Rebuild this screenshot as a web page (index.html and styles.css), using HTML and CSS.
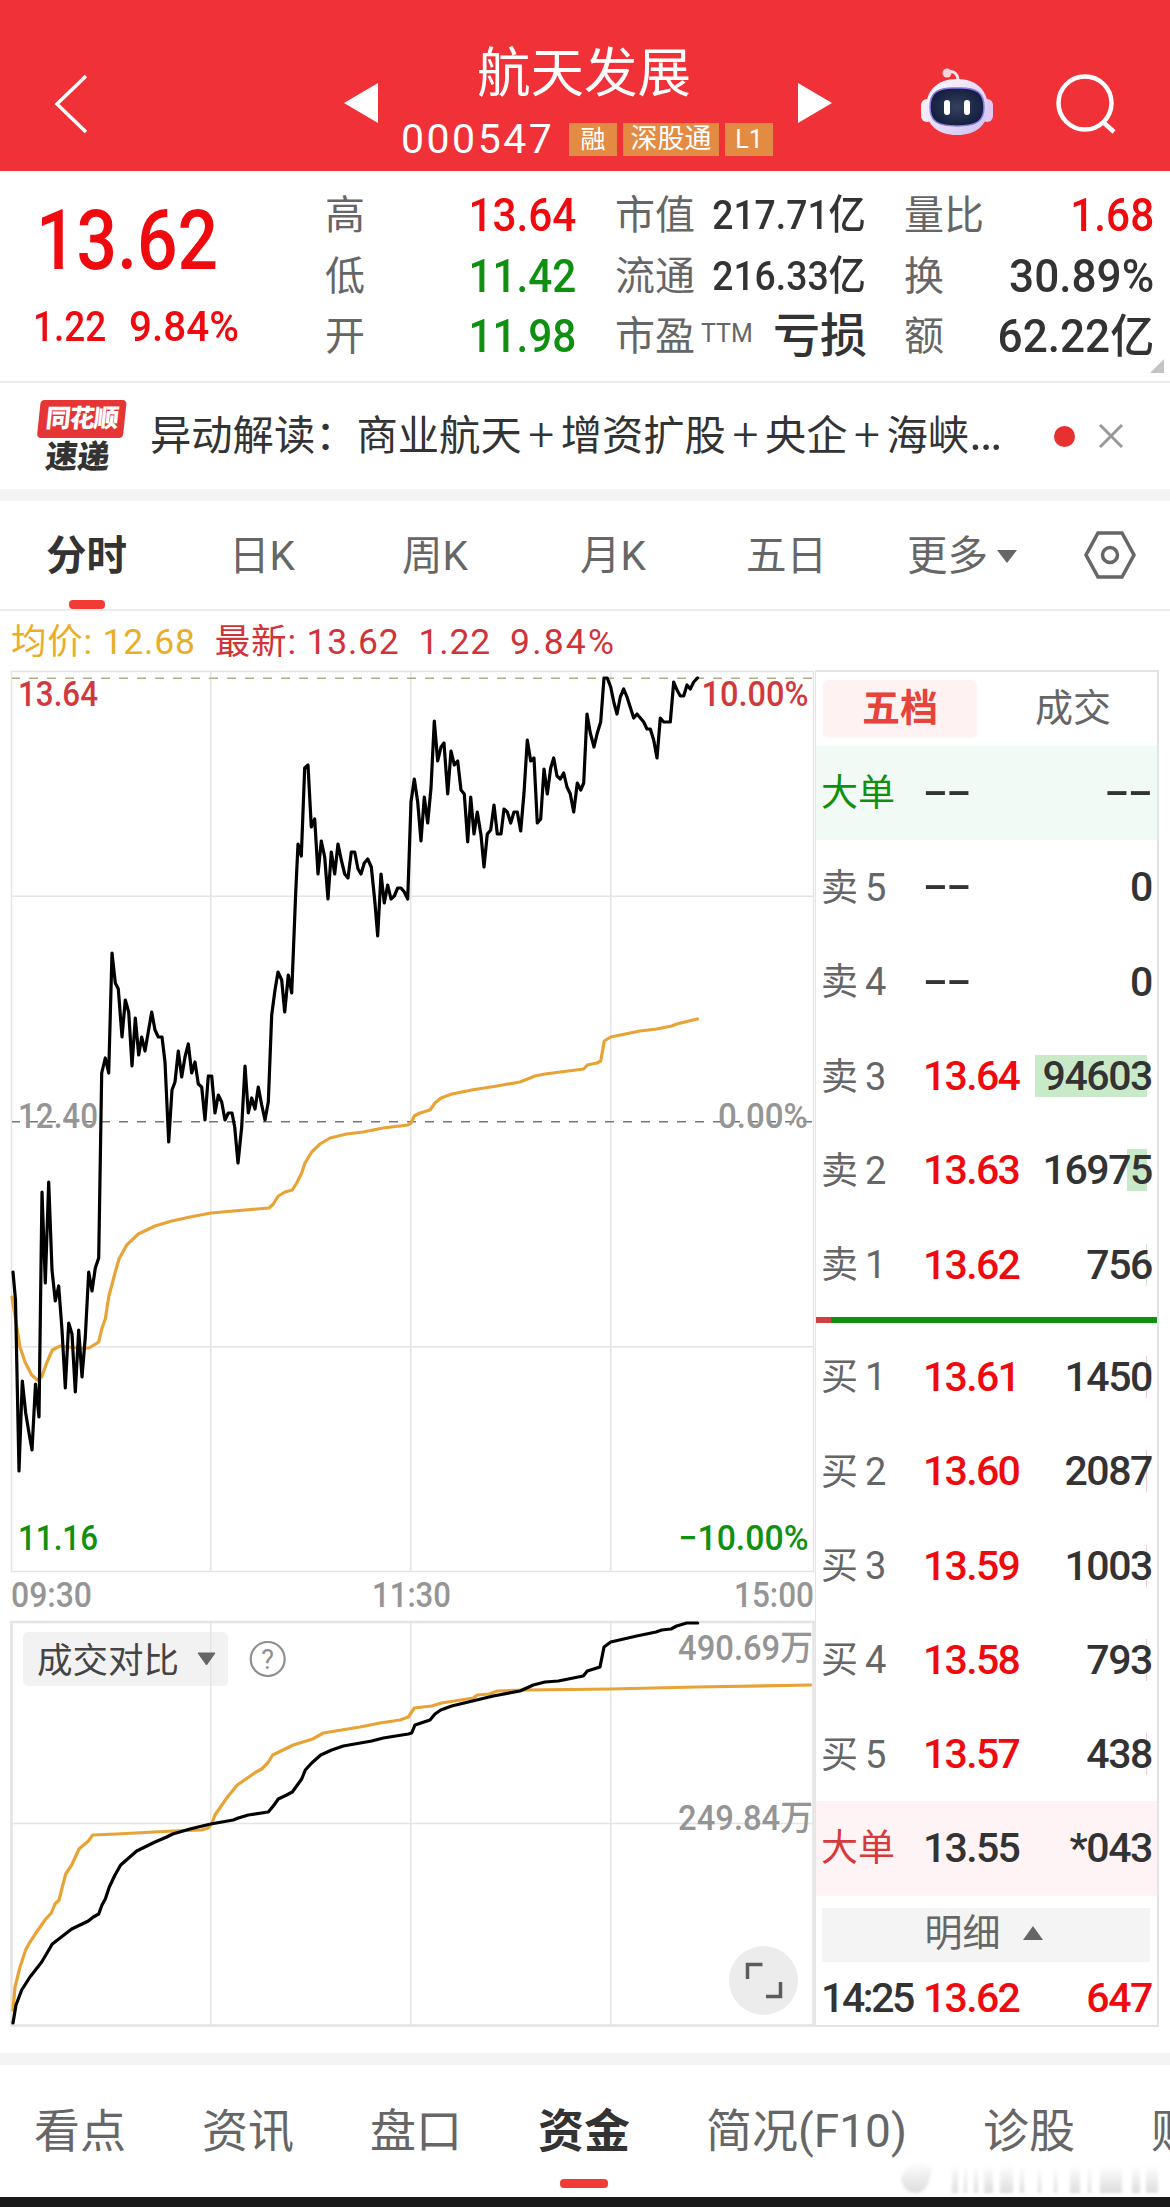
FILE: index.html
```
<!DOCTYPE html>
<html lang="zh-CN">
<head>
    <meta charset="UTF-8">
    <meta name="viewport" content="width=device-width, initial-scale=1.0">
    <title>航天发展 000547</title>
    <link rel="stylesheet" href="styles.css">
</head>
<body>

    <header class="header">
        <svg class="back" width="36" height="62" viewBox="0 0 36 62"><path d="M32 3 3 31 32 59" fill="none" stroke="#fff" stroke-width="3.500"/></svg>
        <svg class="prev" width="34" height="40" viewBox="0 0 34 40"><path d="M34 0V40L0 20Z" fill="#fff"/></svg>
        <div class="stock">
            <div class="stock-name">航天发展</div>
            <div class="stock-code">
                <span class="code">000547</span>
                <span class="tag">融</span>
                <span class="tag tag-wide">深股通</span>
                <span class="tag">L1</span>
            </div>
        </div>
        <svg class="next" width="34" height="40" viewBox="0 0 34 40"><path d="M0 0V40L34 20Z" fill="#fff"/></svg>
        <svg class="robot" width="74" height="70" viewBox="0 0 74 70">
            <defs>
                <linearGradient id="shell" x1="0" y1="0" x2="1" y2="1">
                    <stop offset="0" stop-color="#fff"/>
                    <stop offset=".5" stop-color="#eadcf6"/>
                    <stop offset="1" stop-color="#c9c0f5"/>
                </linearGradient>
                <radialGradient id="visor">
                    <stop offset="0" stop-color="#34415f"/>
                    <stop offset="1" stop-color="#151f3f"/>
                </radialGradient>
            </defs>
            <path d="M27 5C34 3 38 7 38 14" fill="none" stroke="#fbdfe8" stroke-width="3"/>
            <circle cx="27" cy="6" r="4.5" fill="#fbd5dc"/>
            <rect x="1" y="32" width="12" height="23" rx="6" fill="#f2edfb"/>
            <rect x="61" y="32" width="12" height="23" rx="6" fill="#e0c9f0"/>
            <path d="M37 12C58 12 68 25 68 41C68 58 56 68 37 68C18 68 6 58 6 41C6 25 16 12 37 12Z" fill="url(#shell)"/>
            <path d="M37 21C57 20 64 26 64 40C64 54 57 59 37 59C17 59 10 54 10 40C10 26 17 20 37 21Z" fill="url(#visor)" stroke="#8a7be0" stroke-width="1.5"/>
            <rect x="24" y="33" width="6" height="15" rx="3" fill="#fff"/>
            <rect x="44" y="33" width="6" height="15" rx="3" fill="#fff"/>
        </svg>
        <svg class="search" width="62" height="62" viewBox="0 0 62 62"><g fill="none" stroke="#fff" stroke-width="4.5"><circle cx="29" cy="30" r="26.5"/><path d="M47 49 58 59"/></g></svg>
    </header>

    <section class="quote">
        <div class="quote-main">
            <div class="price num">13.62</div>
            <div class="change"><span class="num">1.22</span><span class="num percent">9.84%</span></div>
        </div>
        <div class="quote-col col-range">
            <div><label>高</label><b class="num big red">13.64</b></div>
            <div><label>低</label><b class="num big green">11.42</b></div>
            <div><label>开</label><b class="num big green">11.98</b></div>
        </div>
        <div class="quote-col col-cap">
            <div><label>市值</label><b class="num">217.71亿</b></div>
            <div><label>流通</label><b class="num">216.33亿</b></div>
            <div><label>市盈<sup>TTM</sup></label><b class="loss">亏损</b></div>
        </div>
        <div class="quote-col col-turn">
            <div><label>量比</label><b class="num big red">1.68</b></div>
            <div><label>换</label><b class="num big">30.89%</b></div>
            <div><label>额</label><b class="num big">62.22亿</b></div>
        </div>
        <svg class="corner" width="14" height="14" viewBox="0 0 14 14"><path d="M14 0V14H0Z" fill="#c4c4c4"/></svg>
    </section>

    <section class="news">
        <div class="news-logo">
            <div class="logo-top">同花顺</div>
            <div class="logo-bottom">速递</div>
        </div>
        <div class="news-title">异动解读：商业航天<span>+</span>增资扩股<span>+</span>央企<span>+</span>海峡<em>…</em></div>
        <span class="dot"></span>
        <svg width="24" height="24" viewBox="0 0 24 24"><path d="M1 1 23 23M23 1 1 23" stroke="#999" stroke-width="3"/></svg>
    </section>

    <nav class="period">
        <span class="active">分时</span>
        <span>日K</span>
        <span>周K</span>
        <span>月K</span>
        <span>五日</span>
        <span>更多<svg class="caret" width="20" height="13" viewBox="0 0 20 13"><path d="M0 0H20L10 13Z" fill="#666"/></svg></span>
        <svg class="setting" width="52" height="48" viewBox="0 0 52 48"><g fill="none" stroke="#666" stroke-width="3.5"><path d="M14 2H38L50 24 38 46H14L2 24Z"/><circle cx="26" cy="24" r="7.5"/></g></svg>
    </nav>

    <div class="legend">
        <span class="avg">均价: 12.68</span>
        <span>最新: 13.62</span>
        <span>1.22</span>
        <span class="rate">9.84%</span>
    </div>

    <main class="board">
        <div class="charts">
            <!-- price line -->
            <svg class="price-chart" width="805" height="950" viewBox="10 670 805 950">
                <g fill="none" stroke="#e4e4e4" stroke-width="1.5">
                    <path d="M11.5 671.5H813.5V1571.5H11.5Z"/>
                    <path d="M210.7 672V1571M410.7 672V1571M610.7 672V1571M12 896.3H813M12 1346.7H813"/>
                </g>
                <path d="M12 678.3H813" stroke="#b3ad83" stroke-width="1.5" stroke-dasharray="9 9" stroke-dashoffset="1"/>
                <path d="M12 1121.7H813" stroke="#777" stroke-width="1.5" stroke-dasharray="9 9" stroke-dashoffset="1"/>
                <polyline class="line-avg" points="12,1297 17.3,1330 20,1347 25,1362 31.7,1375 37.3,1380 41.7,1377 46.7,1363 52.3,1350 60,1346 68,1347 80,1348 89,1348 98.7,1342 102,1328 105.3,1319 108.7,1297 115,1273 119,1259 126.7,1245 138.3,1234 155,1226 171.7,1221 190,1217 211,1213 245,1210 269,1208 273.3,1204 278.3,1196 285,1192 292.3,1190 296.7,1183 301.7,1173 305,1163 311.7,1152 320,1144 330,1138 346.7,1134 363,1132 383,1128 407.7,1125 411,1123 414.3,1116 420,1113 430,1110 435,1103 441,1098 452,1094 471.7,1090 497,1086 520,1082 535,1076 545,1074 583.7,1069 587.3,1065 597,1063 600.7,1061 604.3,1041 610.7,1037 640,1031 656.7,1029 671.7,1026 676.7,1024 697.3,1019"/>
                <polyline class="line-now" points="13,1272 15.5,1300 19,1471 22.3,1381 25.7,1413 29,1433 32,1450 35.5,1384 39,1417 42,1192 45.3,1283 48.7,1182 52,1270 55.3,1301 58.7,1286 62,1330 65.3,1388 68.7,1323 72,1334 75.3,1392 78.7,1330 82,1377 85.3,1337 88.7,1272 92,1291 95.3,1268 98.7,1258 101.7,1073 105.3,1058 108.7,1073 112,953 115.3,983 118.3,989 122,1037 125.3,1000 128.7,1012 132,1066 135.3,1018 138.7,1055 141.7,1037 145,1051 151.7,1012 155,1030 158.3,1037 162,1037 165,1062 168.7,1142 172,1090 175,1082 178.3,1051 181.7,1077 185,1057 188.3,1044 191.7,1073 195,1062 198.3,1084 201.7,1087 205,1120 208.3,1076 211.7,1076 215,1113 218.3,1095 221.7,1102 225,1120 228.3,1113 232,1113 234.7,1127 238,1163 241.7,1127 245,1066 248.3,1113 251.7,1098 255,1109 258.3,1087 261.7,1105 265,1120 268.3,1102 271.7,1015 275,990 278,972 281.7,980 284.7,1012 288.3,975 291.7,993 295.7,893 298,844 301.3,856 304.7,768 308,765 311.3,827 314.7,819 318,874 321.3,841 324.7,857 328,899 331.3,852 334.7,874 338,844 341.3,860 344.7,874 348,878 351.3,852 354.7,852 358,869 361,874 364.3,863 367.7,859 371.3,867 374.7,900 377.7,936 381,874 384.3,903 387.7,885 391,899 394.3,896 397.7,888 401,888 404.3,892 407.7,899 411,802 414.3,779 417.7,802 421,841 424.3,797 427.7,823 431,788 434.3,721 437.7,761 441,747 444,743 447.7,794 451,751 454.3,765 457.7,761 461,790 464.3,794 467.7,842 470.7,797 474,834 477.3,812 481,835 484,867 487.3,834 490.7,830 494,805 497.3,834 501,834 504,809 507.3,812 510.7,823 514,812 517.3,812 520.7,831 524,793 527.3,740 530.7,761 534,758 537.3,823 540.7,819 544,769 547.3,794 550.7,768 553.7,758 557,776 560.3,779 563.7,773 567,787 570.3,794 573.7,812 577.3,783 580.7,790 583.7,783 587,714 590.3,733 594,747 597.3,733 600.7,722 604,678 607.3,678 610.7,687 614,703 617,714 620.3,697 623.7,689 627,697 633.7,718 637,714 643.7,722 647,729 650.3,729 653.7,740 657,758 660.3,718 663.7,722 670.3,722 673.7,682 677,690 680.3,696 683.7,696 687,685 690.3,689 693.7,682 697.5,678"/>
                <g class="axis">
                    <text x="18" y="705.500" textLength="80" lengthAdjust="spacingAndGlyphs" class="up">13.64</text>
                    <text x="701.500" y="705.500" textLength="107" lengthAdjust="spacingAndGlyphs" class="up">10.00%</text>
                    <text x="18" y="1127.500" textLength="80" lengthAdjust="spacingAndGlyphs">12.40</text>
                    <text x="718" y="1127.500" textLength="90" lengthAdjust="spacingAndGlyphs">0.00%</text>
                    <text x="18" y="1549.500" textLength="80" lengthAdjust="spacingAndGlyphs" class="down">11.16</text>
                    <text x="678.500" y="1549.500" textLength="130" lengthAdjust="spacingAndGlyphs" class="down">−10.00%</text>
                    <text x="11" y="1606.500" textLength="81" lengthAdjust="spacingAndGlyphs">09:30</text>
                    <text x="372" y="1606.500" textLength="79" lengthAdjust="spacingAndGlyphs">11:30</text>
                    <text x="734" y="1606.500" textLength="80" lengthAdjust="spacingAndGlyphs">15:00</text>
                </g>
            </svg>
            <!-- turnover compared with the previous day -->
            <svg class="volume-chart" width="805" height="408" viewBox="10 1620 805 408">
                <rect x="23" y="1632" width="205" height="54" rx="5" fill="#f2f2f2"/>
                <g fill="none" stroke="#e4e4e4" stroke-width="1.5">
                    <path d="M11.5 1622H813.5V2025.500H11.5Z" stroke-width="2.500"/>
                    <path d="M210.7 1622V2025M410.7 1622V2025M610.7 1622V2025M12 1823.500H813"/>
                </g>
                <text class="menu-text" x="37" y="1673" textLength="142" lengthAdjust="spacingAndGlyphs">成交对比</text>
                <path d="M198 1653H215L206.500 1665Z" fill="#666" stroke="#666" stroke-linejoin="round"/>
                <circle cx="267.700" cy="1659" r="17" fill="none" stroke="#8f8f8f" stroke-width="2.200"/>
                <text class="help" x="267.700" y="1668.500">?</text>
                <polyline class="line-avg" points="13,2010 15,1987 20,1967 26,1949 30,1942 36,1933 45,1920 51.3,1913 55,1904 59,1900 62.3,1887 65.7,1874 71.7,1865 79,1849 88.3,1841 92.7,1835 116.7,1834 173.3,1831 201.7,1830 208.3,1828 212,1823 215,1815 226.7,1798 237.3,1785 256,1772 261.7,1769 267.7,1763 272.7,1755 293.3,1745 312.7,1739 323.3,1733 360,1727 380,1723 400,1720 408.3,1717 414.3,1708 431.7,1706 441.7,1703 473.3,1698 477.3,1695 489.3,1694 497.3,1691 526.7,1690 610.7,1689 696.7,1687 810.7,1685"/>
                <polyline class="line-now" points="13,2023 16,2005 21.7,1990 30,1977 41.7,1962 52.3,1944 71.7,1929 88.3,1921 93.3,1917 98.7,1914 102,1905 105.3,1899 109.3,1887 115,1875 120.7,1865 136.7,1851 155,1842 166.7,1837 172.7,1834 190,1829 210.7,1824 233.3,1820 238.3,1818 248.3,1815 268.3,1812 273.3,1806 278.3,1799 286.7,1795 292.3,1792 301.7,1779 305.3,1770 311.7,1763 320.7,1755 331.7,1750 343.3,1746 371.7,1741 383.3,1738 408.3,1734 411.7,1733 415,1725 430,1720 435,1714 440.7,1710 451.7,1706 493.3,1696 520,1691 533.3,1685 545,1682 558.3,1681 583.3,1676 587.3,1671 600,1667 604,1647 610.7,1642 636.7,1636 656,1632 661.7,1630 671,1629 676.7,1626 686.7,1623 697.7,1623"/>
                <g class="axis">
                    <text x="678" y="1660" textLength="135" lengthAdjust="spacingAndGlyphs">490.69万</text>
                    <text x="678" y="1830" textLength="135" lengthAdjust="spacingAndGlyphs">249.84万</text>
                </g>
                <circle cx="763.500" cy="1980.500" r="34.500" fill="#ececec"/>
                <path d="M762.500 1964.500H747.500V1979M766 1996.500H780.500V1982" fill="none" stroke="#5c5c5c" stroke-width="3.500"/>
            </svg>
        </div>

        <aside class="book">
            <div class="book-tabs"><span class="on">五档</span><span>成交</span></div>
            <div class="row big-sell"><i>大单</i><b class="dash">––</b><em class="dash">––</em></div>
            <div class="row"><i>卖<u>5</u></i><b class="dash">––</b><em>0</em></div>
            <div class="row"><i>卖<u>4</u></i><b class="dash">––</b><em>0</em></div>
            <div class="row"><i>卖<u>3</u></i><b>13.64</b><em><s class="depth depth-full"></s>94603</em></div>
            <div class="row"><i>卖<u>2</u></i><b>13.63</b><em><s class="depth depth-part"></s>16975</em></div>
            <div class="row"><i>卖<u>1</u></i><b>13.62</b><em><s class="depth depth-thin"></s>756</em></div>
            <div class="ratio"></div>
            <div class="row"><i>买<u>1</u></i><b>13.61</b><em><s class="depth depth-buy"></s>1450</em></div>
            <div class="row"><i>买<u>2</u></i><b>13.60</b><em><s class="depth depth-buy"></s>2087</em></div>
            <div class="row"><i>买<u>3</u></i><b>13.59</b><em><s class="depth depth-buy"></s>1003</em></div>
            <div class="row"><i>买<u>4</u></i><b>13.58</b><em><s class="depth depth-buy"></s>793</em></div>
            <div class="row"><i>买<u>5</u></i><b>13.57</b><em><s class="depth depth-buy"></s>438</em></div>
            <div class="row big-buy"><i>大单</i><b>13.55</b><em>*043</em></div>
            <div class="detail">明细<svg width="20" height="14" viewBox="0 0 20 14"><path d="M10 0 20 14H0Z" fill="#666"/></svg></div>
            <div class="row tick"><i>14:25</i><b>13.62</b><em>647</em></div>
        </aside>
    </main>

    <nav class="bottom">
        <span>看点</span>
        <span>资讯</span>
        <span>盘口</span>
        <span class="active">资金</span>
        <span>简况(F10)</span>
        <span>诊股</span>
        <span class="last">财</span>
        <svg class="watermark" width="270" height="40" viewBox="0 0 270 40">
            <defs>
                <linearGradient id="fade" x1="0" y1="0" x2="0" y2="1">
                    <stop offset="0" stop-color="#bbb" stop-opacity="0"/>
                    <stop offset="1" stop-color="#bbb" stop-opacity=".5"/>
                </linearGradient>
            </defs>
            <path d="M5 22Q8 36 20 36Q33 36 36 10L22 4Q10 6 5 22Z" fill="url(#fade)"/>
            <path d="M56 8h6v28h-6zM68 8h3v28h-3zM78 8h4v28h-4zM88 8h9v28h-9zM104 8h13v28h-13zM124 8h4v28h-4zM142 8h3v28h-3zM158 8h3v28h-3zM174 8h10v28h-10zM192 8h3v28h-3zM204 8h22v28h-22zM236 8h8v28h-8zM250 8h12v28h-12z" fill="url(#fade)"/>
        </svg>
    </nav>
    <div class="home-bar"></div>

</body>
</html>
```
FILE: styles.css
```
* {
    box-sizing: border-box;
}

body {
    width: 1170px;
    height: 2207px;
    margin: 0;
    overflow: hidden;
    background-color: #fff;
    color: #333;
    font-family: Roboto, "Noto Sans CJK SC", sans-serif;
}

svg {
    display: block;
    flex: none;
}

.num {
    display: inline-block;
    font-weight: 500;
    white-space: nowrap;
}

.red {
    color: #ee0a0e;
}

.green {
    color: #109010;
}

/* Header */
.header {
    display: flex;
    height: 171px;
    background-color: #f03138;
    color: #fff;
}

.back {
    margin: 73px 0 0 54px;
}

.prev {
    margin: 83px 0 0 254px;
}

.stock {
    width: 420px;
    padding-top: 42px;
    text-align: center;
}

.stock-name {
    padding-right: 8px;
    font-size: 53.5px;
    line-height: 64px;
}

.stock-code {
    display: flex;
    align-items: center;
    gap: 6px;
    height: 34px;
    margin: 16px 0 0 23px;
}

.code {
    width: 162px;
    font-size: 41px;
    letter-spacing: 2.5px;
    text-align: left;
}

.tag {
    width: 48px;
    height: 33px;
    background-color: #e48b43;
    font-size: 25px;
    line-height: 33px;
}

.tag-wide {
    width: 96px;
    font-size: 27px;
}

.next {
    margin-top: 83px;
}

.robot {
    margin: 67px 0 0 88px;
}

.search {
    margin: 73px 0 0 62px;
}

/* Quote numbers */
.quote {
    position: relative;
    display: flex;
    height: 212px;
    padding-top: 14px;
    border-bottom: 2px solid #ececec;
}

.quote-main {
    width: 325px;
    color: #ee0a0e;
}

.price {
    margin: 6px 0 0 36px;
    font-size: 84px;
    line-height: 100px;
    transform: scaleX(0.85);
    transform-origin: left;
}

.change {
    display: flex;
    margin: 10px 0 0 33px;
    font-size: 43px;
    line-height: 50px;
}

.change .num {
    width: 96px;
    transform: scaleX(0.86);
    transform-origin: left;
}

.change .percent {
    transform: scaleX(0.94);
}

.quote-col div {
    display: flex;
    align-items: center;
    justify-content: space-between;
    height: 60.5px;
}

.quote-col label {
    padding-top: 2px;
    color: #666;
    font-size: 40px;
    line-height: 60px;
    white-space: nowrap;
}

.quote-col .num {
    font-size: 41px;
    line-height: 56px;
    transform: scaleX(0.91);
    transform-origin: right;
}

.quote-col .big {
    font-size: 46px;
    transform: scaleX(0.92);
}

.col-range {
    width: 251px;
}

.col-cap {
    width: 251px;
    margin-left: 39px;
}

.col-turn {
    width: 250px;
    margin-left: 38px;
}

.col-turn div:not(:first-child) .big {
    transform: scaleX(0.96);
}

.quote-col sup {
    display: inline-block;
    margin-left: 6px;
    font-size: 25px;
    line-height: 24px;
    vertical-align: 8px;
}

.quote-col .loss {
    margin-right: -1px;
    font-size: 47px;
    font-weight: 500;
    line-height: 60px;
}

.corner {
    position: absolute;
    right: 6px;
    bottom: 8px;
}

/* News line */
.news {
    display: flex;
    align-items: center;
    height: 106px;
    padding-left: 37px;
}

.news-logo {
    width: 86px;
    text-align: center;
    transform: skewX(-6deg);
    font-weight: 900;
}

.logo-top {
    height: 38px;
    border-radius: 4px;
    background-color: #e63535;
    color: #fff;
    font-size: 25px;
    line-height: 37px;
    letter-spacing: -1px;
}

.logo-bottom {
    height: 34px;
    font-size: 32px;
    line-height: 38px;
}

.news-title {
    width: 904px;
    margin-left: 27px;
    font-size: 41.3px;
    line-height: 62px;
    white-space: nowrap;
}

.news-title span {
    display: inline-block;
    width: 39px;
    font-size: 46px;
    font-weight: 300;
    line-height: 40px;
    text-align: center;
}

.news-title em {
    font-size: 50px;
    font-style: normal;
    line-height: 40px;
}

.dot {
    width: 21px;
    height: 21px;
    margin-right: 24px;
    border-radius: 50%;
    background-color: #e73030;
}

/* Period tabs */
.period {
    display: flex;
    align-items: center;
    height: 122px;
    padding-left: 46px;
    border-top: 12px solid #f4f4f4;
    border-bottom: 2px solid #ececec;
    color: #666;
    font-size: 40.5px;
    line-height: 108px;
}

.period span {
    display: flex;
    align-items: center;
    height: 108px;
    padding-top: 2px;
    white-space: nowrap;
}

.period span:nth-child(1) {
    width: 183px;
}

.period span:nth-child(2) {
    width: 173px;
}

.period span:nth-child(3) {
    width: 178px;
}

.period span:nth-child(4) {
    width: 166px;
}

.period span:nth-child(5) {
    width: 161px;
}

.period span:nth-child(6) {
    width: 177px;
}

.caret {
    margin-left: 9px;
}

.active {
    position: relative;
    color: #333;
    font-weight: 700;
}

.active::after {
    content: "";
    position: absolute;
    left: 23px;
    bottom: 0;
    width: 36px;
    height: 9px;
    border-radius: 4px;
    background-color: #f23b35;
}

.legend {
    display: flex;
    gap: 19px;
    height: 59px;
    padding-left: 11px;
    color: #d03438;
    font-size: 35.5px;
    line-height: 63px;
    letter-spacing: 0.8px;
    white-space: nowrap;
}

.legend .avg {
    color: #e8ae28;
}

.legend .rate {
    letter-spacing: 2.2px;
}

/* Charts */
.board {
    display: flex;
    height: 1358px;
    padding-left: 10px;
}

.charts svg {
    overflow: visible;
}

.line-now,
.line-avg {
    fill: none;
    stroke: #000;
    stroke-width: 3.2;
    stroke-linejoin: round;
    stroke-linecap: round;
}

.line-avg {
    stroke: #e8a336;
}

.axis {
    fill: #959595;
    font-size: 35px;
    font-weight: 500;
}

.axis .up {
    fill: #d13a3c;
}

.axis .down {
    fill: #109010;
}

.menu-text {
    fill: #444;
    font-size: 35px;
}

.help {
    fill: #8f8f8f;
    font-size: 27px;
    text-anchor: middle;
}

/* Order book */
.book {
    width: 344px;
    height: 1357px;
    border: 2px solid #e4e4e4;
    border-left-width: 1.5px;
}

.book-tabs {
    display: flex;
    height: 74px;
    padding: 8px 7px;
    color: #666;
    font-size: 38px;
    line-height: 57px;
    text-align: center;
}

.book-tabs span {
    flex: none;
    width: 154px;
    margin-right: 19px;
}

.book-tabs .on {
    border-radius: 5px;
    background-color: #fff2f2;
    color: #e5433c;
    font-weight: 700;
}

.row {
    display: flex;
    align-items: center;
    height: 94.3px;
    padding: 0 5px 0 5px;
    font-size: 41px;
}

.row i {
    width: 102px;
    color: #666;
    font-size: 37px;
    line-height: 54px;
    font-style: normal;
    white-space: nowrap;
    transform: translateY(1px);
}

.row u {
    margin-left: 7px;
    font-size: 38px;
    text-decoration: none;
}

.row b {
    color: #ee0a0e;
    font-weight: 500;
    letter-spacing: -1.7px;
}

.row em {
    position: relative;
    z-index: 0;
    margin-left: auto;
    font-style: normal;
    font-weight: 500;
    letter-spacing: -1.4px;
}

.row .dash,
.big-buy b {
    color: #333;
}

.row .dash {
    letter-spacing: -1px;
    transform: scaleX(0.93);
    transform-origin: left;
}

.row em.dash {
    transform-origin: right;
}

.big-sell {
    background-color: #f2faf6;
}

.big-sell i {
    color: #109010;
}

.big-buy {
    background-color: #fff4f5;
}

.big-buy i {
    color: #d53a3c;
}

.depth {
    position: absolute;
    z-index: -1;
    top: 3px;
    right: 5px;
    height: 42px;
    background-color: #c9eac9;
}

.depth-full {
    width: 112px;
}

.depth-part {
    width: 20px;
}

.depth-thin {
    width: 1px;
}

.depth-buy {
    width: 1px;
    background-color: #f0cccc;
}

.ratio {
    height: 6px;
    margin: 5px 0 7px;
    background: linear-gradient(to right, #d04040 15px, #109010 15px);
}

.detail {
    display: flex;
    align-items: center;
    justify-content: center;
    gap: 22px;
    height: 54px;
    margin: 12px 7px 0 6px;
    padding: 0 5px 3px 0;
    background-color: #f4f4f4;
    color: #666;
    font-size: 38px;
    line-height: 50px;
}

.tick {
    height: 66px;
    padding-top: 6px;
}

.tick i {
    color: #333;
    font-size: 41px;
    font-weight: 500;
    letter-spacing: -2.4px;
    transform: none;
}

.tick em {
    color: #ee0a0e;
}

/* Bottom tabs */
.bottom {
    position: relative;
    display: flex;
    height: 144px;
    margin-top: 25px;
    padding-left: 34px;
    overflow: hidden;
    border-top: 12px solid #f4f4f4;
    color: #666;
    font-size: 46px;
    line-height: 132px;
    white-space: nowrap;
}

.bottom span {
    margin-right: 76px;
}

.bottom .last {
    width: 22px;
    margin-right: 0;
    overflow: hidden;
}

.bottom .active::after {
    bottom: 9px;
    left: 22px;
    width: 48px;
}

/* faint stamp over the corner of the tabs */
.watermark {
    position: absolute;
    right: 4px;
    bottom: 0;
    filter: blur(1.5px);
}

.home-bar {
    height: 11px;
    background-color: #191919;
}
```
